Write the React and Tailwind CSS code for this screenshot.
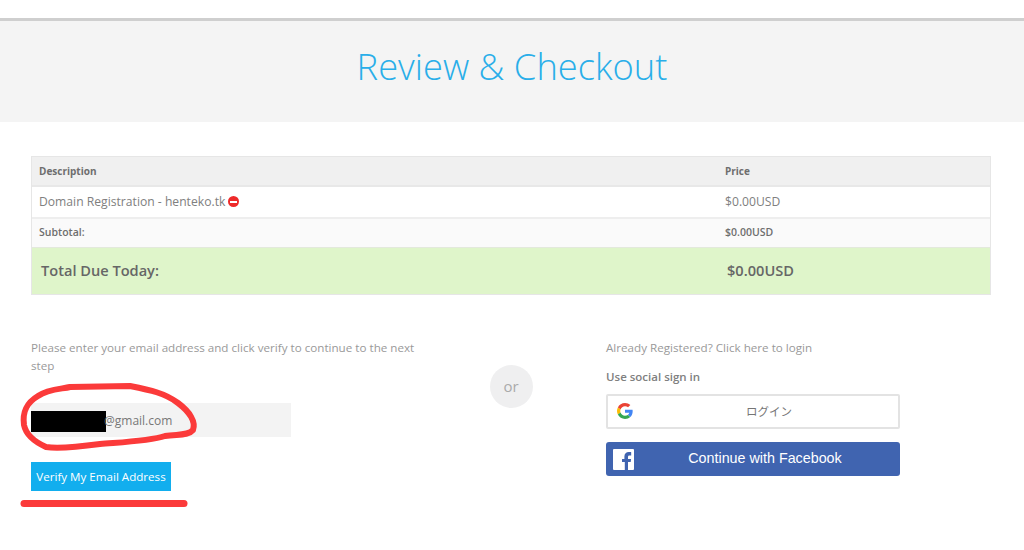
import React from "react";

const sans = "font-['Open_Sans',sans-serif]";

function GoogleIcon() {
    return (
        <svg width="16" height="16" viewBox="0 0 48 48">
            <path fill="#EA4335" d="M24 9.5c3.5 0 6.7 1.2 9.2 3.6l6.9-6.9C35.9 2.4 30.5 0 24 0 14.6 0 6.5 5.4 2.6 13.2l8 6.2C12.5 13.7 17.8 9.5 24 9.5z" />
            <path fill="#4285F4" d="M47 24.5c0-1.6-.1-3.100-.4-4.500H24v9h12.900c-.6 3-2.200 5.500-4.700 7.200l7.700 6c4.500-4.200 7.100-10.300 7.100-17.700z" />
            <path fill="#FBBC05" d="M10.600 28.600c-.5-1.400-.8-3-.8-4.600s.3-3.200.8-4.600l-8-6.200C.9 16.500 0 20.100 0 24s.9 7.500 2.600 10.800l8-6.200z" />
            <path fill="#34A853" d="M24 48c6.500 0 11.900-2.100 15.900-5.800l-7.700-6c-2.200 1.500-4.900 2.300-8.200 2.300-6.200 0-11.500-4.200-13.400-9.900l-8 6.200C6.500 42.600 14.600 48 24 48z" />
        </svg>
    );
}

function FacebookIcon() {
    return (
        <svg width="21" height="21" viewBox="0 0 21 21">
            <rect width="21" height="21" rx="1" fill="#ffffff" />
            <path fill="#4064b0" d="M15 21v-8h2.700l.4-3.100H15V8c0-.9.3-1.500 1.600-1.500h1.600V3.200c-.3 0-1.300-.1-2.400-.1-2.600 0-4.400 1.500-4.400 4.500v2.300H9V13h2.800v8z" />
        </svg>
    );
}

export default function App() {
    return (
        <div className={`relative w-[1024px] h-[550px] bg-white overflow-hidden text-[#777777] ${sans}`}>
            <div className="mt-[18px] h-[104px] bg-[#f4f4f4] border-t-[3px] border-[#cfcfcf] flex justify-center">
                <h1 className="mt-[20px] text-[36.300px] leading-[50px] font-light text-[#29aee9]">Review &amp; Checkout</h1>
            </div>

            <div className="ml-[31px] mr-[33px] mt-[34px] border border-[#e6e6e6] text-[#6e6e6e]">
                <div className="flex h-[30px] items-center bg-[#f0f0f0] border-b-2 border-[#e8e8e8] text-[10px] font-bold">
                    <div className="w-[693px] pl-[7px]">Description</div>
                    <div>Price</div>
                </div>
                <div className="flex h-[32px] items-center bg-white border-b-2 border-[#eeeeee] text-[12.150px] text-[#808080]">
                    <div className="w-[693px] pl-[7px] flex items-center gap-[3px]">
                        Domain Registration - henteko.tk
                        <span className="w-[11px] h-[11px] rounded-full bg-[#ee2a2a] flex items-center justify-center">
                            <span className="w-[7px] h-[2px] bg-white"></span>
                        </span>
                    </div>
                    <div>$0.00USD</div>
                </div>
                <div className="flex h-[28px] items-center bg-[#fafafa] text-[10.500px] font-semibold">
                    <div className="w-[693px] pl-[7px]">Subtotal:</div>
                    <div>$0.00USD</div>
                </div>
                <div className="flex h-[47px] items-center bg-[#dff5ca] border-t border-[#e3e9dc] text-[#666666] text-[14.600px] font-semibold">
                    <div className="w-[695px] pl-[9px]">Total Due Today:</div>
                    <div>$0.00USD</div>
                </div>
            </div>

            <div className="flex mx-[31px] mt-[44px]">
                <div className="w-[260px] shrink-0">
                    <p className="w-[400px] text-[11.650px] leading-[18px] text-[#999999]">Please enter your email address and click verify to continue to the next step</p>
                    <div className="mt-[28px] w-[260px] h-[34px] bg-[#f3f3f3] flex items-center text-[12px] text-[#777777]">
                        <span className="w-[75px] h-[21px] mt-[2px] bg-black"></span>
                        <span className="-ml-[2px] mt-[2px]">@gmail.com</span>
                    </div>
                    <button className="mt-[25px] h-[29px] w-[140px] bg-[#12aeee] text-white text-[11.600px] flex items-center justify-center">Verify My Email Address</button>
                </div>

                <div className="w-[315px] shrink-0 flex justify-center pt-[26px]">
                    <div className="w-[43px] h-[43px] rounded-full bg-[#efeff0] flex items-center justify-center text-[15px] text-[#aaaaaa] ml-[125px]">or</div>
                </div>

                <div className="w-[294px] shrink-0">
                    <p className="text-[11.650px] leading-[18px] text-[#999999]">Already Registered? Click here to login</p>
                    <p className="mt-[12px] text-[11.500px] leading-[16px] font-semibold text-[#808080]">Use social sign in</p>
                    <div className="relative mt-[9px] h-[35px] border-2 border-[#e3e3e3] rounded-[2px] bg-white flex items-center justify-center pl-[32px] text-[11.500px] text-[#757575] font-['Noto_Sans_CJK_JP',sans-serif]">
                        <span className="absolute left-[9px] top-[7px]"><GoogleIcon /></span>
                        ログイン
                    </div>
                    <div className="relative mt-[13px] h-[34px] bg-[#4064b0] rounded-[3px] flex items-center justify-center pl-[24px] text-white text-[14.300px] font-['Liberation_Sans',sans-serif]">
                        <span className="absolute left-[7px] top-[7px]"><FacebookIcon /></span>
                        Continue with Facebook
                    </div>
                </div>
            </div>

            {/* red marker scribbles drawn on top of the screenshot */}
            <svg className="absolute left-0 top-0 pointer-events-none" width="1024" height="550" viewBox="0 0 1024 550" fill="none">
                <path stroke="#fb3a3a" strokeWidth="6" strokeLinecap="round" strokeLinejoin="round" d="M38 396 C48 389 62 389 70 387 L130 386 C150 390 165 393 178 403 C190 412 196 422 193 430 C188 436 178 434 165 436 C150 441 125 442 100 444 C85 446 60 449 46 447 C35 442 26 435 24 425 C22 410 28 402 38 396 Z" />
                <path stroke="#fb3a3a" strokeWidth="7" strokeLinecap="round" d="M24 503.500 L184 503.500" />
            </svg>
        </div>
    );
}
